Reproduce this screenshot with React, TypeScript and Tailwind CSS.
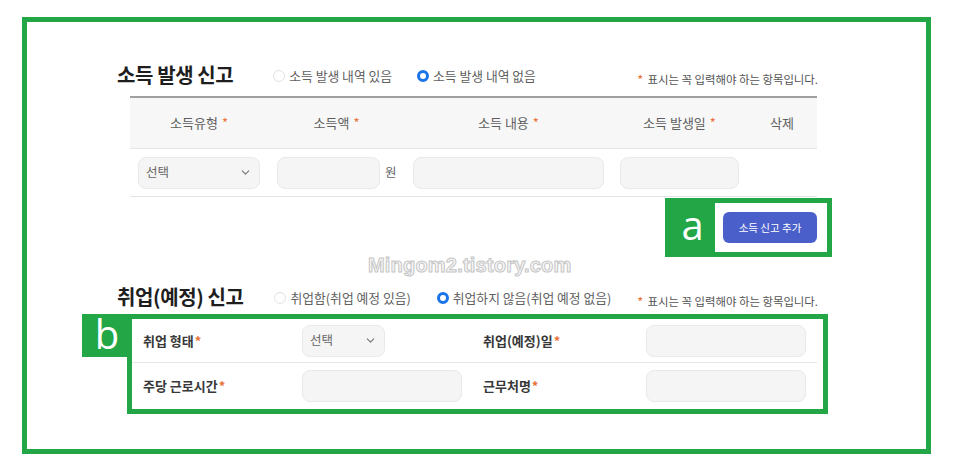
import { ChevronDown } from 'lucide-react'

const KR = "font-['Noto_Sans_CJK_KR','Noto_Sans',sans-serif]"

/* ── 작은 부품들 ── */
function Star({ gap = true }: { gap?: boolean }) {
  return <span className={gap ? 'ml-[4px] text-[#e8713c]' : 'ml-[1px] text-[#e8713c]'}>*</span>
}

function Radio({ checked, label }: { checked?: boolean; label: string }) {
  return (
    <label className="flex items-center gap-[4px] text-[12.8px] text-[#606060]">
      {checked ? (
        <span className="w-[12px] h-[12px] rounded-full border-[3.5px] border-[#1a73e8] bg-white" />
      ) : (
        <span className="w-[12px] h-[12px] rounded-full border border-[#e2e2e2] bg-white" />
      )}
      {label}
    </label>
  )
}

function Field({ className }: { className: string }) {
  return <div className={`h-[32px] rounded-[8px] border border-[#e9e9e9] bg-[#f5f5f5] ${className}`} />
}

function SelectBox({ className }: { className: string }) {
  return (
    <div className={`h-[32px] rounded-[8px] border border-[#e9e9e9] bg-[#f5f5f5] flex items-center justify-between pl-[7px] pr-[7px] text-[12.5px] font-normal text-[#666] ${className}`}>
      <span>선택</span>
      <ChevronDown size={13} strokeWidth={2} color="#777" />
    </div>
  )
}

function Note() {
  return (
    <div className="ml-auto mr-[108px] mt-[9px] text-[11.4px] text-[#555] flex items-center">
      <span className="text-[#e8713c] mr-[4px] text-[13px] leading-none">*</span>
      표시는 꼭 입력해야 하는 항목입니다.
    </div>
  )
}

/* ── 소득 발생 신고 ── */
function IncomeSection() {
  return (
    <>
      <div className="flex items-center h-[24px]">
        <h2 className="text-[20px] font-bold text-[#1e1e1e] tracking-[-0.4px]">소득 발생 신고</h2>
        <div className="ml-[40px] flex items-center gap-[25px] mt-[1px]">
          <Radio label="소득 발생 내역 있음" />
          <Radio checked label="소득 발생 내역 없음" />
        </div>
        <Note />
      </div>

      <div className="ml-[13px] mt-[9px] w-[687px] border-t-2 border-[#9f9f9f]">
        <div className="grid grid-cols-[138px_137px_207px_135px_70px] h-[51px] bg-[#f7f7f7] border-b border-[#e6e6e6] items-center text-[13px] text-[#5f5f5f]">
          <div className="text-center">소득유형<Star /></div>
          <div className="text-center">소득액<Star /></div>
          <div className="text-center">소득 내용<Star /></div>
          <div className="text-center">소득 발생일<Star /></div>
          <div className="text-center">삭제</div>
        </div>
        <div className="grid grid-cols-[138px_137px_207px_135px_70px] h-[48px] border-b border-[#e3e3e3] items-center">
          <div className="pl-[8px]"><SelectBox className="w-[122px]" /></div>
          <div className="pl-[9px] flex items-center gap-[5px]">
            <Field className="w-[103px]" />
            <span className="text-[12.5px] text-[#666]">원</span>
          </div>
          <div className="pl-[8px]"><Field className="w-[191px]" /></div>
          <div className="pl-[8px]"><Field className="w-[119px]" /></div>
          <div />
        </div>
      </div>

      {/* a: 소득 신고 추가 */}
      <div className="ml-[548px] mt-px flex w-[167px] h-[59px] border-[5px] border-[#22a646]">
        <div className="w-[45px] bg-[#22a646] flex items-center justify-center text-white text-[40px] leading-none font-['Open_Sans',sans-serif] pb-[6px]">a</div>
        <div className="flex-1 flex items-center justify-center pr-[2px]">
          <div className="w-[94px] h-[31px] rounded-[6px] bg-[#4b5fca] text-white text-[10.5px] flex items-center justify-center">소득 신고 추가</div>
        </div>
      </div>
    </>
  )
}

/* ── 취업(예정) 신고 ── */
function JobSection() {
  return (
    <>
      <div className="mt-[28px] flex items-center h-[24px]">
        <h2 className="text-[20px] font-bold text-[#1e1e1e] tracking-[-0.4px]">취업(예정) 신고</h2>
        <div className="ml-[31px] flex items-center gap-[26px] mt-[1px]">
          <Radio label="취업함(취업 예정 있음)" />
          <Radio checked label="취업하지 않음(취업 예정 없음)" />
        </div>
        <Note />
      </div>

      {/* b: 입력 박스 */}
      <div className="relative ml-[10px] mt-[5px] w-[701px] h-[100px] border-[5px] border-[#22a646]">
        <div className="absolute left-[-50px] top-[-5px] w-[50px] h-[43px] bg-[#22a646] flex items-center justify-center text-white text-[40px] leading-none font-['Open_Sans',sans-serif] pb-[4px]">b</div>
        <div className="grid grid-cols-[170px_171px_173px_1fr] h-[44px] items-center border-b border-[#e6e6e6] mr-[6px] text-[13px] font-semibold text-[#383838]">
          <div className="pl-[11px]">취업 형태<Star gap={false} /></div>
          <div><SelectBox className="w-[83px] h-[31px]" /></div>
          <div className="pl-[10px]">취업(예정)일<Star gap={false} /></div>
          <div><Field className="w-[160px]" /></div>
        </div>
        <div className="grid grid-cols-[170px_171px_173px_1fr] h-[45px] items-center text-[13px] font-semibold text-[#383838]">
          <div className="pl-[11px]">주당 근로시간<Star gap={false} /></div>
          <div><Field className="w-[160px]" /></div>
          <div className="pl-[10px]">근무처명<Star gap={false} /></div>
          <div><Field className="w-[160px]" /></div>
        </div>
      </div>
    </>
  )
}

export default function App() {
  return (
    <div className={`w-[966px] h-[476px] bg-white overflow-hidden pt-[17px] ${KR}`}>
      <div className="relative ml-[22px] w-[909px] h-[437px] border-[5px] border-[#22a646] pl-[90px] pt-[41px]">
        <IncomeSection />
        <JobSection />
        {/* 워터마크 */}
        <div className="absolute left-[341px] top-[228px] text-[20px] font-bold font-['Liberation_Sans',sans-serif] text-[#f6f6f6] [-webkit-text-stroke:1px_#c6c6c6] tracking-[0.2px] select-none">
          Mingom2.tistory.com
        </div>
      </div>
    </div>
  )
}
